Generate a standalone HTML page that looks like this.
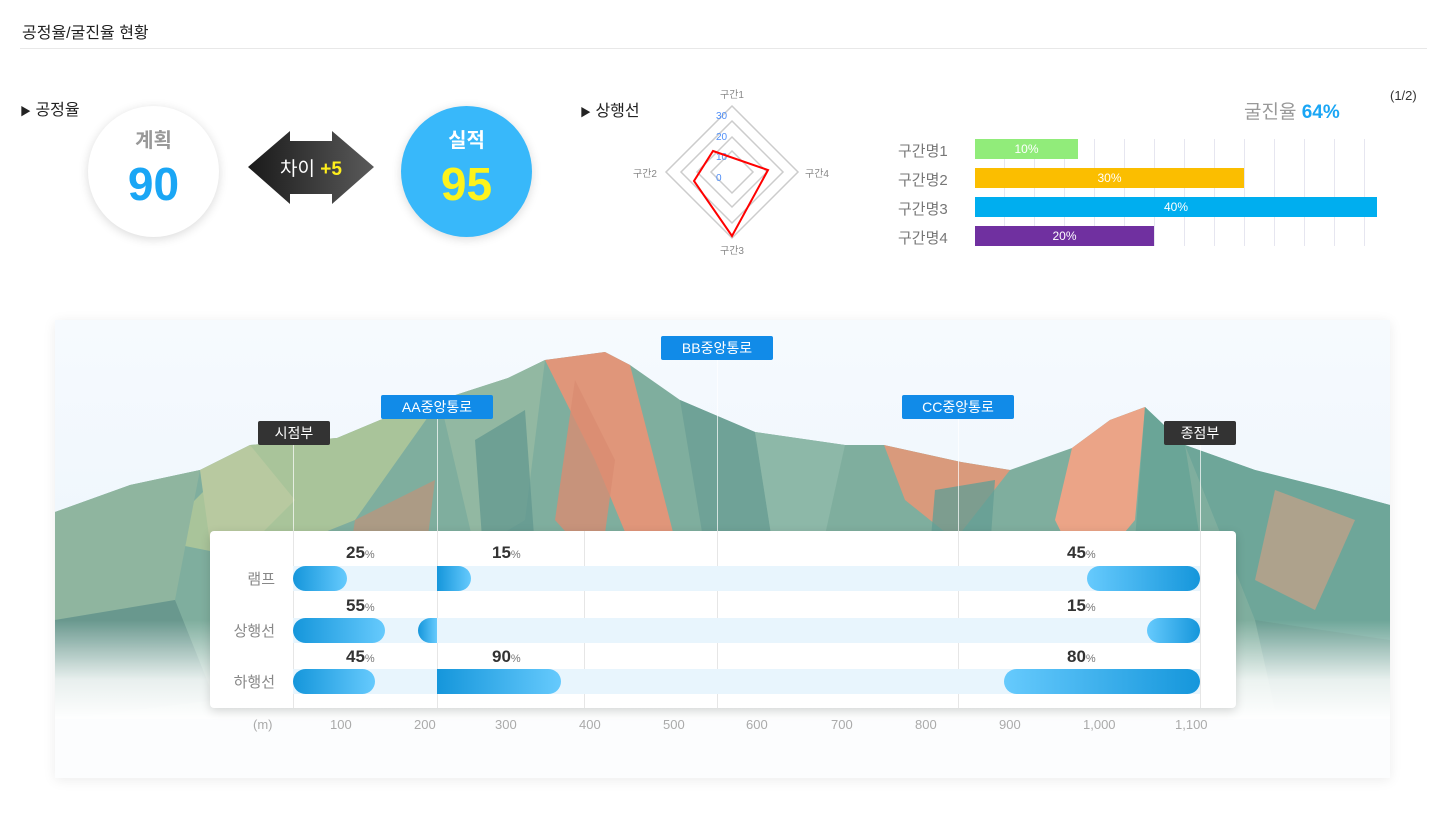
<!DOCTYPE html>
<html><head><meta charset="utf-8"><style>
*{margin:0;padding:0;box-sizing:border-box}
body{width:1448px;height:819px;background:#fff;font-family:"Liberation Sans","Noto Sans CJK KR",sans-serif;position:relative;overflow:hidden;color:#222}
.a{position:absolute;white-space:nowrap}
.tag{position:absolute;height:24px;line-height:24px;font-size:14px;color:#fff;text-align:center;border-radius:2px}
.blue{background:#118be8}.dark{background:#333}
.vl{position:absolute;width:1px;background:rgba(255,255,255,.7)}
.pl{position:absolute;width:1px;background:#e6e6e6}
.trk{position:absolute;left:293px;width:907px;height:25px;background:#e8f5fd}
.pill{position:absolute;height:25px;border-radius:13px}
.L{background:linear-gradient(90deg,#1596db,#66cafd)}
.R{background:linear-gradient(90deg,#66cafd,#1596db)}
.pct{position:absolute;font-size:17px;font-weight:bold;color:#333}
.pct small{font-size:11px;color:#777;font-weight:normal}
.rl{position:absolute;font-size:15px;color:#888;text-align:right;width:70px;left:205px}
.ax{position:absolute;top:717px;font-size:13px;color:#aaa}
.bn{position:absolute;left:898px;font-size:15px;color:#777}
.bar{position:absolute;left:975px;height:20px;color:#fff;font-size:12px;text-align:center;line-height:20px}
</style></head><body>
<div class="a" style="left:22px;top:19px;font-size:16px">공정율/굴진율 현황</div>
<div class="a" style="left:20px;top:48px;width:1407px;height:1px;background:#e8e8e8"></div>

<div class="a" style="left:20px;top:96px;font-size:16px"><span style="font-size:11px">▶</span> 공정율</div>
<div class="a" style="left:88px;top:106px;width:131px;height:131px;border-radius:50%;background:#fff;box-shadow:0 2px 10px rgba(0,0,0,.15)"></div>
<div class="a" style="left:88px;top:124px;width:131px;text-align:center;font-size:20px;color:#999;font-weight:bold">계획</div>
<div class="a" style="left:88px;top:156px;width:131px;text-align:center;font-size:46px;color:#1aa6f5;font-weight:bold;line-height:56px">90</div>
<svg class="a" style="left:248px;top:131px" width="126" height="73"><defs><linearGradient id="g1"><stop offset="0" stop-color="#1a1a1a"/><stop offset="1" stop-color="#5a5a5a"/></linearGradient></defs><polygon points="0,36 42,0 42,10 84,10 84,0 126,36 84,73 84,63 42,63 42,73" fill="url(#g1)"/></svg>
<div class="a" style="left:248px;top:154px;width:126px;text-align:center;font-size:19px;color:#fff">차이 <b style="color:#ffef1c">+5</b></div>
<div class="a" style="left:401px;top:106px;width:131px;height:131px;border-radius:50%;background:#38b8fa;box-shadow:0 2px 10px rgba(0,0,0,.15)"></div>
<div class="a" style="left:401px;top:124px;width:131px;text-align:center;font-size:20px;color:#fff;font-weight:bold">실적</div>
<div class="a" style="left:401px;top:156px;width:131px;text-align:center;font-size:46px;color:#fdf31c;font-weight:bold;line-height:56px">95</div>

<div class="a" style="left:580px;top:97px;font-size:16px"><span style="font-size:11px">▶</span> 상행선</div>
<svg class="a" style="left:620px;top:85px" width="230" height="175">
<g fill="none" stroke="#ccc" stroke-width="1.5">
<polygon points="112,21 178,87 112,153 46,87"/><polygon points="112,36 163,87 112,138 61,87"/><polygon points="112,52 147,87 112,122 77,87"/><polygon points="112,66 133,87 112,108 91,87"/></g>
<g font-size="10" fill="#4f8ef7" font-family="Liberation Sans,sans-serif"><text x="96" y="34">30</text><text x="96" y="55">20</text><text x="96" y="75">10</text><text x="96" y="96">0</text></g>
<polygon points="93,66 148,85 112,151 74,96" fill="none" stroke="#f00" stroke-width="2"/>
<g font-size="10" fill="#888" font-family="Liberation Sans,Noto Sans CJK KR,sans-serif"><text x="100" y="13">구간1</text><text x="100" y="169">구간3</text><text x="13" y="92">구간2</text><text x="185" y="92">구간4</text></g>
</svg>

<div class="a" style="left:1390px;top:88px;font-size:13px;color:#333">(1/2)</div>
<div class="a" style="left:1244px;top:97px;font-size:19px;color:#999">굴진율 <b style="color:#1aa6f5">64%</b></div>
<div class="a" style="left:975px;top:139px;width:415px;height:107px;background:repeating-linear-gradient(90deg,transparent 0,transparent 29px,#e6e6f0 29px,#e6e6f0 30px)"></div>
<div class="bn" style="top:140px">구간명1</div><div class="bar" style="top:139px;width:103px;background:#91ec7a">10%</div>
<div class="bn" style="top:169px">구간명2</div><div class="bar" style="top:168px;width:269px;background:#fbbe00">30%</div>
<div class="bn" style="top:198px">구간명3</div><div class="bar" style="top:197px;width:402px;background:#00aeef">40%</div>
<div class="bn" style="top:227px">구간명4</div><div class="bar" style="top:226px;width:179px;background:#7030a0">20%</div>

<div class="a" style="left:55px;top:320px;width:1335px;height:458px;background:#f4f9fd;box-shadow:0 2px 12px rgba(0,0,0,.08);overflow:hidden">
<svg width="1335" height="458" style="position:absolute;left:0;top:0">
<defs><linearGradient id="fd" x1="0" y1="0" x2="0" y2="1"><stop offset="0" stop-color="#fff" stop-opacity="0"/><stop offset=".6" stop-color="#fff" stop-opacity=".85"/><stop offset="1" stop-color="#fff" stop-opacity="1"/></linearGradient>
<linearGradient id="sky" x1="0" y1="0" x2="0" y2="1"><stop offset="0" stop-color="#f6fafe"/><stop offset="1" stop-color="#e8f3fb"/></linearGradient></defs>
<rect width="1335" height="458" fill="url(#sky)"/>
<polygon points="0,192 75,165 145,150 195,125 282,118 325,100 385,80 453,58 490,40 550,32 575,45 625,80 700,112 790,125 829,125 906,142 955,150 1017,128 1055,100 1090,87 1130,125 1200,150 1280,170 1335,185 1335,458 0,458" fill="#7fae9e"/>
<polygon points="195,125 282,118 325,100 385,80 300,200 200,240 100,220" fill="#a9c49a"/>
<polygon points="0,192 75,165 145,150 120,280 0,300" fill="#8fb59f"/>
<polygon points="145,150 195,125 240,180 160,260" fill="#b8c9a0"/>
<polygon points="490,40 550,32 575,45 620,220 590,260 540,140" fill="#e0967a"/>
<polygon points="520,60 560,140 545,250 500,200" fill="#d98c72" opacity=".8"/>
<polygon points="385,80 453,58 490,40 470,200 420,230" fill="#92b8a2"/>
<polygon points="420,120 470,90 480,230 430,260" fill="#5f968e" opacity=".7"/>
<polygon points="625,80 700,112 720,240 650,230" fill="#6fa297"/>
<polygon points="700,112 790,125 760,260 720,240" fill="#8db8a8"/>
<polygon points="829,125 906,142 955,150 900,220 850,180" fill="#d99a7c"/>
<polygon points="880,170 940,160 930,300 870,290" fill="#659e93" opacity=".8"/>
<polygon points="1017,128 1055,100 1090,87 1080,200 1030,260 1000,200" fill="#eba487"/>
<polygon points="1090,87 1130,125 1150,250 1080,220" fill="#6aa597"/>
<polygon points="1130,125 1200,150 1280,170 1335,185 1335,320 1200,300" fill="#6ea699"/>
<polygon points="1220,170 1300,200 1260,290 1200,260" fill="#d9a084" opacity=".6"/>
<polygon points="300,200 380,160 360,320 280,330" fill="#c98d75" opacity=".6"/>
<polygon points="0,300 120,280 160,380 0,400" fill="#5f8f88" opacity=".7"/>
<polygon points="1200,300 1335,320 1335,400 1220,390" fill="#5f958c" opacity=".7"/>
<rect y="300" width="1335" height="100" fill="url(#fd)"/>
<rect y="399" width="1335" height="59" fill="#fcfdfe"/>
</svg>
</div>

<div class="vl" style="left:293px;top:445px;height:86px"></div>
<div class="vl" style="left:437px;top:419px;height:112px"></div>
<div class="vl" style="left:717px;top:360px;height:171px"></div>
<div class="vl" style="left:958px;top:419px;height:112px"></div>
<div class="vl" style="left:1200px;top:445px;height:86px"></div>
<div class="tag dark" style="left:258px;top:421px;width:72px">시점부</div>
<div class="tag blue" style="left:381px;top:395px;width:112px">AA중앙통로</div>
<div class="tag blue" style="left:661px;top:336px;width:112px">BB중앙통로</div>
<div class="tag blue" style="left:902px;top:395px;width:112px">CC중앙통로</div>
<div class="tag dark" style="left:1164px;top:421px;width:72px">종점부</div>

<div class="a" style="left:210px;top:531px;width:1026px;height:177px;background:#fff;border-radius:4px;box-shadow:0 3px 10px rgba(0,0,0,.15)"></div>
<div class="pl" style="left:293px;top:531px;height:177px"></div>
<div class="pl" style="left:437px;top:531px;height:177px"></div>
<div class="pl" style="left:584px;top:531px;height:177px"></div>
<div class="pl" style="left:717px;top:531px;height:177px"></div>
<div class="pl" style="left:958px;top:531px;height:177px"></div>
<div class="pl" style="left:1200px;top:531px;height:177px"></div>

<div class="rl" style="top:568px">램프</div>
<div class="trk" style="top:566px"></div>
<div class="pill L" style="left:293px;top:566px;width:54px"></div>
<div class="pill L" style="left:437px;top:566px;width:34px;border-radius:0 13px 13px 0"></div>
<div class="pill R" style="left:1087px;top:566px;width:113px"></div>
<div class="pct" style="left:346px;top:543px">25<small>%</small></div>
<div class="pct" style="left:492px;top:543px">15<small>%</small></div>
<div class="pct" style="left:1067px;top:543px">45<small>%</small></div>

<div class="rl" style="top:620px">상행선</div>
<div class="trk" style="top:618px"></div>
<div class="pill L" style="left:293px;top:618px;width:92px"></div>
<div class="pill L" style="left:418px;top:618px;width:19px;border-radius:13px 0 0 13px"></div>
<div class="pill R" style="left:1147px;top:618px;width:53px"></div>
<div class="pct" style="left:346px;top:596px">55<small>%</small></div>
<div class="pct" style="left:1067px;top:596px">15<small>%</small></div>

<div class="rl" style="top:671px">하행선</div>
<div class="trk" style="top:669px"></div>
<div class="pill L" style="left:293px;top:669px;width:82px"></div>
<div class="pill L" style="left:437px;top:669px;width:124px;border-radius:0 13px 13px 0"></div>
<div class="pill R" style="left:1004px;top:669px;width:196px"></div>
<div class="pct" style="left:346px;top:647px">45<small>%</small></div>
<div class="pct" style="left:492px;top:647px">90<small>%</small></div>
<div class="pct" style="left:1067px;top:647px">80<small>%</small></div>

<div class="ax" style="left:253px">(m)</div>
<div class="ax" style="left:330px">100</div>
<div class="ax" style="left:414px">200</div>
<div class="ax" style="left:495px">300</div>
<div class="ax" style="left:579px">400</div>
<div class="ax" style="left:663px">500</div>
<div class="ax" style="left:746px">600</div>
<div class="ax" style="left:831px">700</div>
<div class="ax" style="left:915px">800</div>
<div class="ax" style="left:999px">900</div>
<div class="ax" style="left:1083px">1,000</div>
<div class="ax" style="left:1175px">1,100</div>
</body></html>
